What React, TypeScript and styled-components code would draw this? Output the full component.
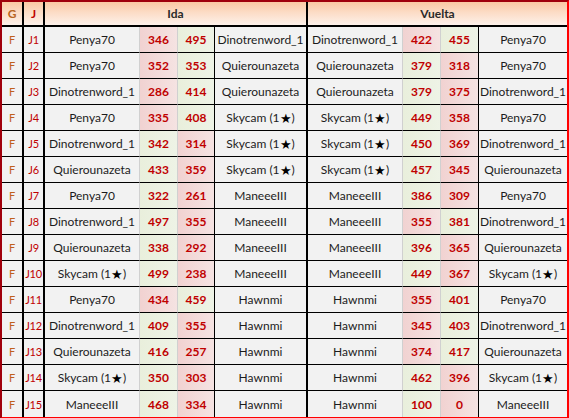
import React from "react";
import styled, { createGlobalStyle, css } from "styled-components";

type Row = [string, number, number, string, string, number, number, string];

const SKY = "Skycam (1★)";

const rows: Row[] = [
  ["Penya70", 346, 495, "Dinotrenword_1", "Dinotrenword_1", 422, 455, "Penya70"],
  ["Penya70", 352, 353, "Quierounazeta", "Quierounazeta", 379, 318, "Penya70"],
  ["Dinotrenword_1", 286, 414, "Quierounazeta", "Quierounazeta", 379, 375, "Dinotrenword_1"],
  ["Penya70", 335, 408, SKY, SKY, 449, 358, "Penya70"],
  ["Dinotrenword_1", 342, 314, SKY, SKY, 450, 369, "Dinotrenword_1"],
  ["Quierounazeta", 433, 359, SKY, SKY, 457, 345, "Quierounazeta"],
  ["Penya70", 322, 261, "ManeeeIII", "ManeeeIII", 386, 309, "Penya70"],
  ["Dinotrenword_1", 497, 355, "ManeeeIII", "ManeeeIII", 355, 381, "Dinotrenword_1"],
  ["Quierounazeta", 338, 292, "ManeeeIII", "ManeeeIII", 396, 365, "Quierounazeta"],
  [SKY, 499, 238, "ManeeeIII", "ManeeeIII", 449, 367, SKY],
  ["Penya70", 434, 459, "Hawnmi", "Hawnmi", 355, 401, "Penya70"],
  ["Dinotrenword_1", 409, 355, "Hawnmi", "Hawnmi", 345, 403, "Dinotrenword_1"],
  ["Quierounazeta", 416, 257, "Hawnmi", "Hawnmi", 374, 417, "Quierounazeta"],
  [SKY, 350, 303, "Hawnmi", "Hawnmi", 462, 396, SKY],
  ["ManeeeIII", 468, 334, "Hawnmi", "Hawnmi", 100, 0, "ManeeeIII"],
];

type Edge = "thick" | "black" | "gray" | "none";

const GlobalStyle = createGlobalStyle`
  html, body {
    margin: 0;
    padding: 0;
    background: #ffffff;
  }
  body {
    font-family: "Lato", "Liberation Sans", sans-serif;
  }
`;

const Sheet = styled.div`
  width: 569px;
  box-sizing: border-box;
  border-top: 2px solid #a0000c;
  border-left: 2px solid #a0000c;
  border-right: 2px solid #ff0000;
  border-bottom: 2px solid #ff0000;
  display: grid;
  grid-template-columns: 22px 21px 95px 38px 37px 93px 95px 38px 38px 88px;
  grid-auto-rows: 26px;
  grid-template-rows: 25px;
  background: #f2f2f2;
`;

const edge = (e: Edge) => {
  switch (e) {
    case "thick":
      return "2px solid #000";
    case "black":
      return "1px solid #000";
    case "gray":
      return "1px solid #d0d0d0";
    default:
      return "none";
  }
};

const cellBase = css<{ $right: Edge; $last?: boolean }>`
  box-sizing: border-box;
  display: flex;
  align-items: center;
  justify-content: center;
  white-space: nowrap;
  overflow: hidden;
  font-size: 12px;
  border-right: ${(p) => edge(p.$right)};
  border-bottom: ${(p) => (p.$last ? "none" : "1px solid #000")};
`;

const HeadCell = styled.div<{ $right: Edge; $span?: number; $color?: string }>`
  ${cellBase}
  grid-column: span ${(p) => p.$span ?? 1};
  border-bottom: 2px solid #000;
  background: linear-gradient(to bottom, #fbc9a3 0%, #fcdcc6 45%, #fdf1ea 100%);
  font-weight: 700;
  color: ${(p) => p.$color ?? "#2a2a2a"};
`;

const TagCell = styled.div<{ $right: Edge; $last?: boolean; $color: string }>`
  ${cellBase}
  font-size: 11px;
  letter-spacing: -0.3px;
  color: ${(p) => p.$color};
`;

const NameCell = styled.div<{ $right: Edge; $last?: boolean }>`
  ${cellBase}
  color: #1c1c1c;
`;

const ScoreCell = styled.div<{ $right: Edge; $last?: boolean; $win: boolean }>`
  ${cellBase}
  color: #c00000;
  font-weight: 700;
  background: ${(p) =>
    p.$win
      ? "linear-gradient(to right, #e9efdc, #eef3e6)"
      : "linear-gradient(to right, #f1d2d1, #f5e3e2)"};
`;

const Star = styled.span`
  color: #000;
  font-size: 13px;
`;

const Name = ({ text }: { text: string }) => {
  if (!text.includes("★")) return <>{text}</>;
  const [a, b] = text.split("★");
  return (
    <>
      {a}
      <Star>★</Star>
      {b}
    </>
  );
};

export default function App() {
  return (
    <>
      <GlobalStyle />
      <Sheet>
        <HeadCell $right="thick" $color="#b8651f">G</HeadCell>
        <HeadCell $right="thick" $color="#c00000">J</HeadCell>
        <HeadCell $right="thick" $span={4}>Ida</HeadCell>
        <HeadCell $right="none" $span={4}>Vuelta</HeadCell>
        {rows.map((r, i) => {
          const last = i === rows.length - 1;
          return (
            <React.Fragment key={i}>
              <TagCell $right="thick" $last={last} $color="#c0601c">F</TagCell>
              <TagCell $right="thick" $last={last} $color="#c00000">J{i + 1}</TagCell>
              <NameCell $right="gray" $last={last}><Name text={r[0]} /></NameCell>
              <ScoreCell $right="gray" $last={last} $win={r[1] > r[2]}>{r[1]}</ScoreCell>
              <ScoreCell $right="black" $last={last} $win={r[2] > r[1]}>{r[2]}</ScoreCell>
              <NameCell $right="thick" $last={last}><Name text={r[3]} /></NameCell>
              <NameCell $right="gray" $last={last}><Name text={r[4]} /></NameCell>
              <ScoreCell $right="gray" $last={last} $win={r[5] > r[6]}>{r[5]}</ScoreCell>
              <ScoreCell $right="black" $last={last} $win={r[6] > r[5]}>{r[6]}</ScoreCell>
              <NameCell $right="none" $last={last}><Name text={r[7]} /></NameCell>
            </React.Fragment>
          );
        })}
      </Sheet>
    </>
  );
}
